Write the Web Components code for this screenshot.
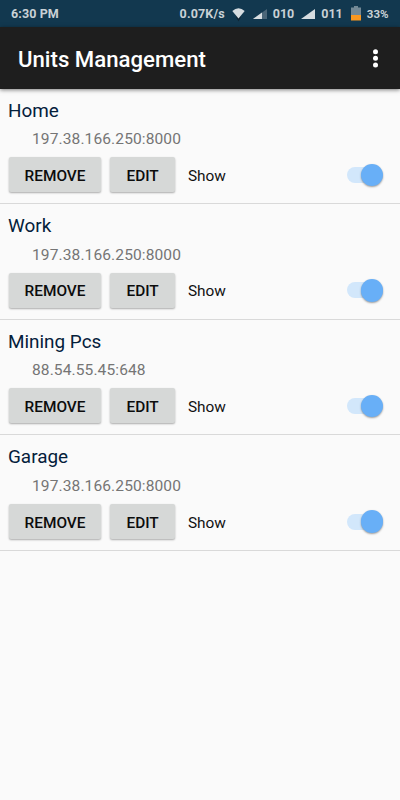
<!DOCTYPE html>
<html lang="en">
<head>
<meta charset="UTF-8">
<title>Units Management</title>
<style>
  body {
    margin: 0;
    background-color: #fafafa;
    font-family: Roboto, sans-serif;
  }
</style>
</head>
<body>
<units-page></units-page>

<script>
class StatusBar extends HTMLElement {
  constructor() {
    super();
    this.attachShadow({ mode: "open" });
  }

  connectedCallback() {
    this.render();
  }

  render() {
    this.shadowRoot.innerHTML = `
      <style>
      :host {
        display: flex;
        align-items: center;
        height: 27px;
        box-sizing: border-box;
        padding: 1px 11.5px 0 11px;
        background-color: #12384f;
        color: #c9d1d6;
        font-size: 12.5px;
        font-weight: 700;
        line-height: 16px;
        white-space: nowrap;
      }
      .clock { flex: 1; letter-spacing: .1px; }
      .speed { letter-spacing: .15px; }
      svg { display: block; flex: none; }
      .wifi { margin: 1px 8px 0 7px; }
      .sim1 { margin-right: 6px; }
      .sim2 { margin: 0 6px 0 7px; }
      .battery { margin: 0 6px 2px 8px; }
      .percent { font-size: 11.5px; }
      </style>
      <span class="clock">6:30 PM</span>
      <span class="speed">0.07K/s</span>
      <svg class="wifi" width="13" height="15" viewBox="0 0 13 15">
        <path d="M5 8.500h3l1 1.500-2.500 4.500L4 10z" fill="#102433"/>
        <path d="M.3 4Q6.500 -1.500 12.700 4L6.500 11.500Z" fill="#d6dce0"/>
      </svg>
      <svg class="sim1" width="14" height="10" viewBox="0 0 14 10">
        <path d="M0 10L14 0V10Z" fill="#4b6678"/>
        <path d="M0 10L9 3.600V10Z" fill="#d6dce0"/>
      </svg>
      <span>010</span>
      <svg class="sim2" width="14" height="10" viewBox="0 0 14 10">
        <path d="M0 10L14 0V10Z" fill="#d6dce0"/>
      </svg>
      <span>011</span>
      <svg class="battery" width="10" height="15" viewBox="0 0 10 15">
        <path d="M3 0h4v1.500h3V9H0V1.500h3z" fill="#738996"/>
        <path d="M0 9h10v5.500H0z" fill="#fa9820"/>
      </svg>
      <span class="percent">33%</span>
    `;
  }
}

class AppBar extends HTMLElement {
  constructor() {
    super();
    this.attachShadow({ mode: "open" });
  }

  connectedCallback() {
    this.render();
  }

  render() {
    this.shadowRoot.innerHTML = `
      <style>
      :host {
        display: flex;
        align-items: center;
        justify-content: space-between;
        position: relative;
        height: 61.600px;
        box-sizing: border-box;
        padding: 2px 20px 0 18px;
        background-color: #1e1e1e;
        color: #fff;
        box-shadow: 0 1px 4px rgba(0, 0, 0, .5);
      }
      h1 {
        margin: 0;
        font-size: 22.200px;
        font-weight: 500;
        line-height: 30px;
      }
      button {
        display: block;
        border: none;
        padding: 0;
        background: none;
      }
      svg { display: block; }
      </style>
      <h1><slot></slot></h1>
      <button aria-label="More">
        <svg width="9" height="20" viewBox="0 0 9 20">
          <g fill="#fff">
            <circle cx="4.500" cy="2.700" r="2.500"/>
            <circle cx="4.500" cy="9.300" r="2.500"/>
            <circle cx="4.500" cy="16" r="2.500"/>
          </g>
        </svg>
      </button>
    `;
  }
}

class RaisedButton extends HTMLElement {
  constructor() {
    super();
    this.attachShadow({ mode: "open" });
  }

  connectedCallback() {
    this.render();
  }

  render() {
    this.shadowRoot.innerHTML = `
      <style>
      :host { display: block; }
      button {
        display: block;
        width: 100%;
        height: 35px;
        padding: 2px 0 0;
        border: none;
        border-radius: 2px;
        background-color: #d6d8d7;
        box-shadow: 0 1px 2px rgba(0, 0, 0, .32);
        color: #0c0c0c;
        font: 500 15.400px Roboto, sans-serif;
        text-transform: uppercase;
      }
      </style>
      <button><slot></slot></button>
    `;
  }
}

class ToggleSwitch extends HTMLElement {
  constructor() {
    super();
    this.attachShadow({ mode: "open" });
  }

  connectedCallback() {
    this.render();
  }

  render() {
    this.shadowRoot.innerHTML = `
      <style>
      :host {
        display: flex;
        align-items: center;
        width: 36px;
        height: 23px;
      }
      .track {
        width: 31px;
        height: 16px;
        border-radius: 8px;
        background-color: #d2e7fb;
      }
      .thumb {
        flex: none;
        width: 22.400px;
        height: 22.400px;
        margin-left: -17.400px;
        border-radius: 50%;
        background-color: #68aff7;
        box-shadow: 0 1px 2px rgba(0, 0, 0, .38);
      }
      </style>
      <div class="track"></div>
      <div class="thumb"></div>
    `;
  }
}

class UnitItem extends HTMLElement {
  constructor() {
    super();
    this.attachShadow({ mode: "open" });
  }

  connectedCallback() {
    this.render();
  }

  render() {
    this.shadowRoot.innerHTML = `
      <style>
      :host {
        display: block;
        height: 115.560px;
        box-sizing: border-box;
        padding: 9px 17px 0 8px;
        border-bottom: 1px solid #d9d9d9;
      }
      .name {
        color: #04203a;
        font-size: 18.900px;
        line-height: 26px;
      }
      .address {
        padding: 5.800px 0 0 24px;
        color: #757575;
        font-size: 15.560px;
        letter-spacing: .1px;
        line-height: 20px;
      }
      .actions {
        display: flex;
        align-items: center;
        margin-top: 8px;
      }
      .remove { width: 92.900px; margin-left: .6px; }
      .edit { width: 64.200px; margin-left: 9px; }
      .show {
        flex: 1;
        padding-top: 2px;
        margin-left: 13.300px;
        color: #111;
        font-size: 15.400px;
        line-height: 20px;
      }
      </style>
      <div class="name"><slot></slot></div>
      <div class="address"><slot name="address"></slot></div>
      <div class="actions">
        <raised-button class="remove">Remove</raised-button>
        <raised-button class="edit">Edit</raised-button>
        <span class="show">Show</span>
        <toggle-switch></toggle-switch>
      </div>
    `;
  }
}

class UnitsPage extends HTMLElement {
  constructor() {
    super();
    this.attachShadow({ mode: "open" });
  }

  connectedCallback() {
    this.render();
  }

  render() {
    this.shadowRoot.innerHTML = `
      <style>
      :host {
        display: block;
        height: 800px;
        overflow: hidden;
        background-color: #fafafa;
      }
      </style>
      <status-bar></status-bar>
      <app-bar>Units Management</app-bar>
      <main>
        <unit-item>Home<span slot="address">197.38.166.250:8000</span></unit-item>
        <unit-item>Work<span slot="address">197.38.166.250:8000</span></unit-item>
        <unit-item>Mining Pcs<span slot="address">88.54.55.45:648</span></unit-item>
        <unit-item>Garage<span slot="address">197.38.166.250:8000</span></unit-item>
      </main>
    `;
  }
}

window.customElements.define("status-bar", StatusBar);
window.customElements.define("app-bar", AppBar);
window.customElements.define("raised-button", RaisedButton);
window.customElements.define("toggle-switch", ToggleSwitch);
window.customElements.define("unit-item", UnitItem);
window.customElements.define("units-page", UnitsPage);
</script>
</body>
</html>
